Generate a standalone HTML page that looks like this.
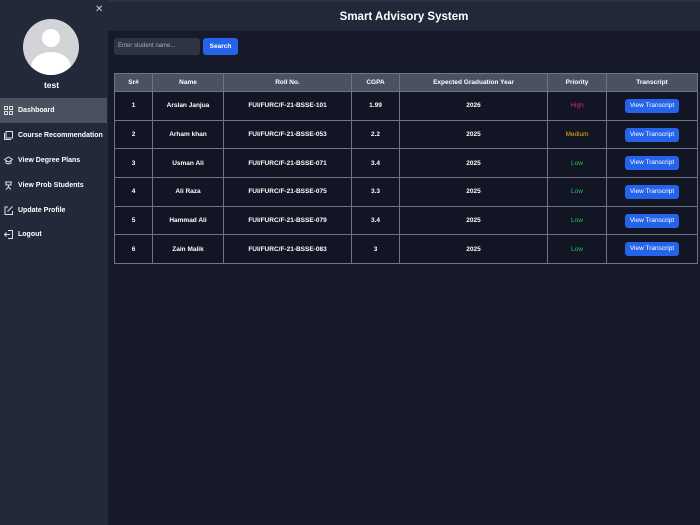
<!DOCTYPE html>
<html><head><meta charset="utf-8"><style>
*{margin:0;padding:0;box-sizing:border-box}
body{width:700px;height:525px;background:#161a2a;font-family:"Liberation Sans",sans-serif;color:#fff;position:relative;overflow:hidden;font-weight:bold}
.side{position:absolute;left:0;top:0;width:108px;height:525px;background:#232938}
.hdr{position:absolute;left:108px;top:0;width:592px;height:31px;background:#222837;text-align:center;font-size:11.5px;line-height:31px;border-top:2px solid #2b3340}
.av{position:absolute;left:23px;top:19px;width:56px;height:56px;border-radius:50%;background:#d3d4d8;overflow:hidden}
.av .h{position:absolute;left:19px;top:10px;width:18px;height:18px;border-radius:50%;background:#fff}
.av .b{position:absolute;left:8px;top:33px;width:40px;height:30px;border-radius:50% 50% 0 0;background:#fff}
.x{position:absolute;left:95px;top:4px;font-size:10px;color:#ccc;font-weight:normal}
.name{position:absolute;left:0;width:103px;top:80px;text-align:center;font-size:8.5px}
.item{position:absolute;left:0;width:107px;height:25px;font-size:7px;line-height:25px;padding-left:18px}
.item.act{background:#4b505e}
.item svg{position:absolute;left:4px;top:8px}
.inp{position:absolute;left:114px;top:38px;width:86px;height:17px;background:#2f3441;border-radius:3px;font-size:6px;color:#aab;line-height:17px;padding-left:4px;font-weight:normal}
.btn{position:absolute;left:203px;top:38px;width:35px;height:17px;background:#2563eb;border-radius:3px;font-size:6.5px;line-height:17px;text-align:center}
table{position:absolute;left:114px;top:73px;border-collapse:collapse;font-size:6.5px}
td,th{border:1px solid #6f7482;text-align:center;padding:0}
th{background:#4b5160;height:18px}
td{background:#121523;height:28.7px}
.vt{display:inline-block;background:#2563eb;border-radius:3px;width:54px;height:14px;line-height:14px;font-weight:normal;font-size:6.5px}
</style></head><body>
<div class="side">
<div class="x">✕</div>
<div class="av"><div class="h"></div><div class="b"></div></div>
<div class="name">test</div>
<div class="item act" style="top:98px"><svg width="9" height="9" viewBox="0 0 9 9" fill="none" stroke="#ddd" stroke-width="1"><rect x=".5" y=".5" width="3" height="3"/><rect x="5.5" y=".5" width="3" height="3"/><rect x=".5" y="5.5" width="3" height="3"/><rect x="5.5" y="5.5" width="3" height="3"/></svg>Dashboard</div>
<div class="item" style="top:123px"><svg width="9" height="9" viewBox="0 0 9 9" fill="none" stroke="#ddd"><rect x="2" y=".5" width="6.5" height="6.5"/><path d="M.5 2v6.5H7"/></svg>Course Recommendation</div>
<div class="item" style="top:148px"><svg width="9" height="9" viewBox="0 0 9 9" fill="none" stroke="#ddd"><path d="M.5 3.5L4.5 1l4 2.5-4 2.5z M2 4.5v2.5c1.5 1 3.5 1 5 0V4.5"/></svg>View Degree Plans</div>
<div class="item" style="top:173px"><svg width="9" height="9" viewBox="0 0 9 9" fill="none" stroke="#ddd"><path d="M1 1h7M2 1v3h5V1M4.5 4v2M2 8.5l2.5-2.5 2.5 2.5"/></svg>View Prob Students</div>
<div class="item" style="top:198px"><svg width="9" height="9" viewBox="0 0 9 9" fill="none" stroke="#ddd"><path d="M4 1H1v7.5h7.5V5M3.5 5.5l5-5"/></svg>Update Profile</div>
<div class="item" style="top:222px"><svg width="9" height="9" viewBox="0 0 9 9" fill="none" stroke="#ddd"><path d="M4 .5h4.5v8H4M6 4.5H.5M2.5 2.5l-2 2 2 2"/></svg>Logout</div>
</div>
<div class="hdr">Smart Advisory System</div>
<div class="inp">Enter student name...</div>
<div class="btn">Search</div>
<table>
<tr><th style="width:38px">Sr#</th><th style="width:71px">Name</th><th style="width:128px">Roll No.</th><th style="width:48px">CGPA</th><th style="width:148px">Expected Graduation Year</th><th style="width:59px">Priority</th><th style="width:91px">Transcript</th></tr>
<tr><td>1</td><td>Arslan Janjua</td><td>FUI/FURC/F-21-BSSE-101</td><td>1.99</td><td>2026</td><td style="color:#e0245e;font-weight:normal">High</td><td><span class="vt">View Transcript</span></td></tr>
<tr><td>2</td><td>Arham khan</td><td>FUI/FURC/F-21-BSSE-053</td><td>2.2</td><td>2025</td><td style="color:#eab308;font-weight:normal">Medium</td><td><span class="vt">View Transcript</span></td></tr>
<tr><td>3</td><td>Usman Ali</td><td>FUI/FURC/F-21-BSSE-071</td><td>3.4</td><td>2025</td><td style="color:#22c55e;font-weight:normal">Low</td><td><span class="vt">View Transcript</span></td></tr>
<tr><td>4</td><td>Ali Raza</td><td>FUI/FURC/F-21-BSSE-075</td><td>3.3</td><td>2025</td><td style="color:#22c55e;font-weight:normal">Low</td><td><span class="vt">View Transcript</span></td></tr>
<tr><td>5</td><td>Hammad Ali</td><td>FUI/FURC/F-21-BSSE-079</td><td>3.4</td><td>2025</td><td style="color:#22c55e;font-weight:normal">Low</td><td><span class="vt">View Transcript</span></td></tr>
<tr><td>6</td><td>Zain Malik</td><td>FUI/FURC/F-21-BSSE-083</td><td>3</td><td>2025</td><td style="color:#22c55e;font-weight:normal">Low</td><td><span class="vt">View Transcript</span></td></tr>
</table>
</body></html>
